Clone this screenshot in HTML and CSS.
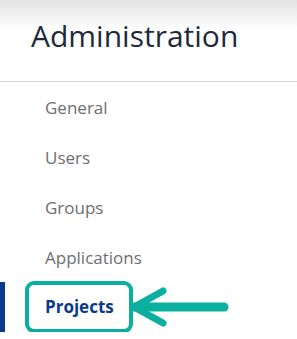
FILE: index.html
```html
<!DOCTYPE html>
<html lang="en">
<head>
  <meta charset="UTF-8">
  <meta name="viewport" content="width=device-width, initial-scale=1.0">
  <title>Administration</title>
  <link rel="stylesheet" href="styles.css">
</head>
<body>
  <header class="page-head">
    <h1>Administration</h1>
  </header>
  <nav class="side-nav">
    <ul>
      <li><a href="#">General</a></li>
      <li><a href="#">Users</a></li>
      <li><a href="#">Groups</a></li>
      <li><a href="#">Applications</a></li>
      <li class="active">
        <a href="#" class="highlight">Projects</a>
        <svg class="arrow" width="100" height="44" viewBox="0 0 100 44">
          <path d="M4 22 H94" stroke="#0aaf9f" stroke-width="9" stroke-linecap="round" fill="none"/>
          <path d="M33 6 L4 22 L33 38" stroke="#0aaf9f" stroke-width="7" stroke-linecap="round" stroke-linejoin="round" fill="none"/>
        </svg>
      </li>
    </ul>
  </nav>
</body>
</html>
```

FILE: styles.css
```css
* { margin: 0; padding: 0; box-sizing: border-box; }
body {
  font-family: 'Open Sans', 'Noto Sans', sans-serif;
  background: #fff;
  color: #1e2a3c;
  overflow: hidden;
}
.page-head {
  height: 82px;
  padding: 21px 0 0 31px;
  border-bottom: 1px solid #d3d3d3;
  background: linear-gradient(#e3e3e3, #fff 30px, #fff);
}
.page-head h1 {
  font-size: 30px;
  font-weight: 400;
  line-height: 30px;
  color: #1e2a3c;
}
.side-nav ul { list-style: none; }
.side-nav li {
  position: relative;
  height: 50px;
  display: flex;
  align-items: center;
  padding-left: 45px;
}
.side-nav a {
  font-size: 17px;
  color: #6e6e6e;
  text-decoration: none;
}
.side-nav li.active::before {
  content: '';
  position: absolute;
  left: 0;
  top: 0;
  width: 5px;
  height: 50px;
  background: #0a3a8c;
}
.side-nav a.highlight {
  font-weight: 700;
  color: #0a3a8c;
  margin-left: -20px;
  border: 4px solid #0aaf9f;
  border-radius: 9px;
  padding: 10px 15px 11px 16px;
}
.arrow {
  position: absolute;
  left: 130px;
  top: 3px;
}
```
